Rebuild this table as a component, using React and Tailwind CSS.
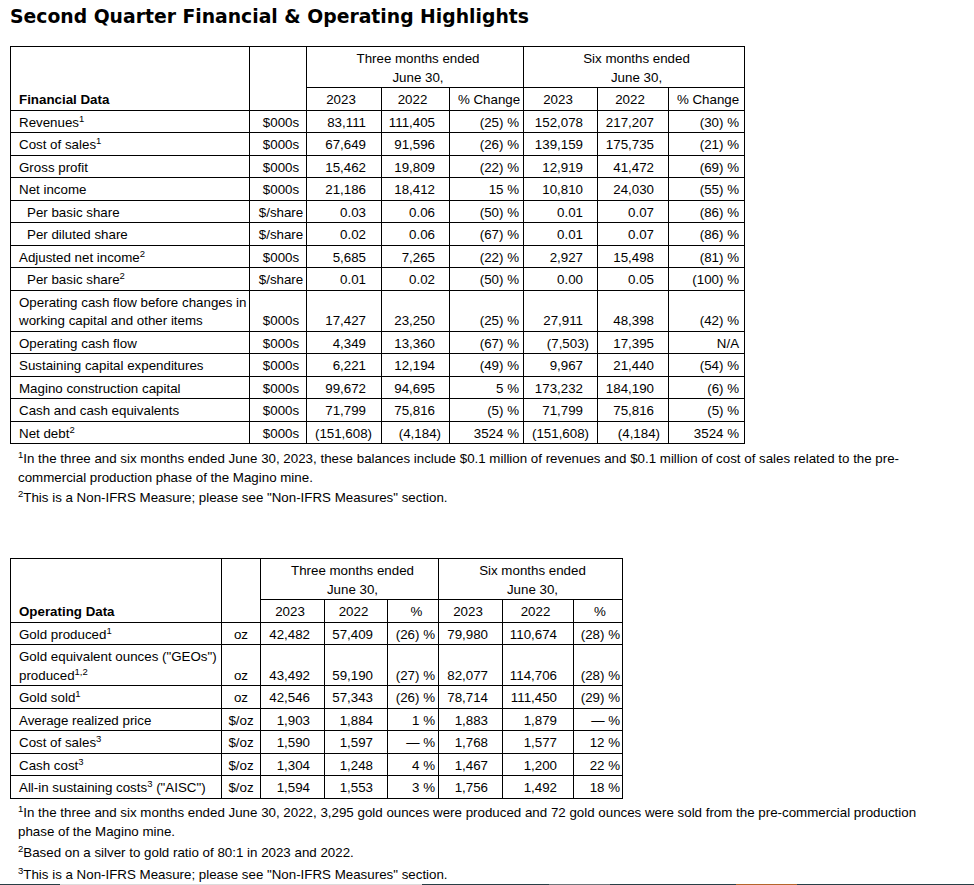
const financial = [
  { label: 'Revenues', sup: '1', unit: '$000s', v: ['83,111', '111,405', '(25) %', '152,078', '217,207', '(30) %'] },
  { label: 'Cost of sales', sup: '1', unit: '$000s', v: ['67,649', '91,596', '(26) %', '139,159', '175,735', '(21) %'] },
  { label: 'Gross profit', unit: '$000s', v: ['15,462', '19,809', '(22) %', '12,919', '41,472', '(69) %'] },
  { label: 'Net income', unit: '$000s', v: ['21,186', '18,412', '15 %', '10,810', '24,030', '(55) %'] },
  { label: 'Per basic share', indent: true, unit: '$/share', v: ['0.03', '0.06', '(50) %', '0.01', '0.07', '(86) %'] },
  { label: 'Per diluted share', indent: true, unit: '$/share', v: ['0.02', '0.06', '(67) %', '0.01', '0.07', '(86) %'] },
  { label: 'Adjusted net income', sup: '2', unit: '$000s', v: ['5,685', '7,265', '(22) %', '2,927', '15,498', '(81) %'] },
  { label: 'Per basic share', sup: '2', indent: true, unit: '$/share', v: ['0.01', '0.02', '(50) %', '0.00', '0.05', '(100) %'] },
  { label: ['Operating cash flow before changes in', 'working capital and other items'], unit: '$000s', v: ['17,427', '23,250', '(25) %', '27,911', '48,398', '(42) %'] },
  { label: 'Operating cash flow', unit: '$000s', v: ['4,349', '13,360', '(67) %', '(7,503)', '17,395', 'N/A'] },
  { label: 'Sustaining capital expenditures', unit: '$000s', v: ['6,221', '12,194', '(49) %', '9,967', '21,440', '(54) %'] },
  { label: 'Magino construction capital', unit: '$000s', v: ['99,672', '94,695', '5 %', '173,232', '184,190', '(6) %'] },
  { label: 'Cash and cash equivalents', unit: '$000s', v: ['71,799', '75,816', '(5) %', '71,799', '75,816', '(5) %'] },
  { label: 'Net debt', sup: '2', unit: '$000s', v: ['(151,608)', '(4,184)', '3524 %', '(151,608)', '(4,184)', '3524 %'] },
];

const operating = [
  { label: 'Gold produced', sup: '1', unit: 'oz', v: ['42,482', '57,409', '(26) %', '79,980', '110,674', '(28) %'] },
  { label: ['Gold equivalent ounces ("GEOs")', 'produced'], sup: '1,2', unit: 'oz', v: ['43,492', '59,190', '(27) %', '82,077', '114,706', '(28) %'] },
  { label: 'Gold sold', sup: '1', unit: 'oz', v: ['42,546', '57,343', '(26) %', '78,714', '111,450', '(29) %'] },
  { label: 'Average realized price', unit: '$/oz', v: ['1,903', '1,884', '1 %', '1,883', '1,879', '— %'] },
  { label: 'Cost of sales', sup: '3', unit: '$/oz', v: ['1,590', '1,597', '— %', '1,768', '1,577', '12 %'] },
  { label: 'Cash cost', sup: '3', unit: '$/oz', v: ['1,304', '1,248', '4 %', '1,467', '1,200', '22 %'] },
  { label: 'All-in sustaining costs', sup: '3', after: ' ("AISC")', unit: '$/oz', v: ['1,594', '1,553', '3 %', '1,756', '1,492', '18 %'] },
];

const cell = 'border border-black pt-[3px] pb-0 align-bottom';

function Sup({ children }) {
  return <sup className="text-[9.5px]">{children}</sup>;
}

function Label({ row }) {
  const lines = Array.isArray(row.label) ? row.label : [row.label];
  return (
    <>
      {lines.map((l, i) => (
        <span key={i}>
          {i > 0 && <br />}
          {l}
          {i === lines.length - 1 && row.sup && <Sup>{row.sup}</Sup>}
          {i === lines.length - 1 && row.after}
        </span>
      ))}
    </>
  );
}

// accounting style: plain numbers leave room for a closing paren
function Num({ value }) {
  if (value.endsWith(')')) return value;
  return (
    <>
      {value}
      <span className="inline-block w-[6px]" />
    </>
  );
}

function FinancialTable() {
  const pads = ['pr-[9px]', 'pr-[8px]', 'pr-[4px]', 'pr-[8px]', 'pr-[8px]', 'pr-[5px]'];
  return (
    <table className="table-fixed border-collapse w-[734px]">
      <colgroup>
        <col className="w-[239px]" />
        <col className="w-[57px]" />
        <col className="w-[75px]" />
        <col className="w-[68px]" />
        <col className="w-[74px]" />
        <col className="w-[74px]" />
        <col className="w-[71px]" />
        <col className="w-[76px]" />
      </colgroup>
      <thead>
        <tr>
          <th rowSpan={2} className={`${cell} text-left pl-[8px] font-bold`}>Financial Data</th>
          <th rowSpan={2} className={cell}></th>
          <th colSpan={3} className={`${cell} font-normal text-center pl-[6px]`}>Three months ended<br />June 30,</th>
          <th colSpan={3} className={`${cell} font-normal text-center pl-[5px]`}>Six months ended<br />June 30,</th>
        </tr>
        <tr>
          <th className={`${cell} font-normal text-center pr-[6px]`}>2023</th>
          <th className={`${cell} font-normal text-center pr-[6px]`}>2022</th>
          <th className={`${cell} font-normal text-center pl-[5px]`}>% Change</th>
          <th className={`${cell} font-normal text-center pr-[5px]`}>2023</th>
          <th className={`${cell} font-normal text-center pr-[6px]`}>2022</th>
          <th className={`${cell} font-normal text-center pl-[3px]`}>% Change</th>
        </tr>
      </thead>
      <tbody>
        {financial.map((row, r) => (
          <tr key={r}>
            <td className={`${cell} ${row.indent ? 'pl-[16px]' : 'pl-[8px]'}`}>
              <Label row={row} />
            </td>
            <td className={`${cell} text-center pl-[6px]`}>{row.unit}</td>
            {row.v.map((v, i) => (
              <td key={i} className={`${cell} text-right ${pads[i]}`}>
                {i === 2 || i === 5 ? v : <Num value={v} />}
              </td>
            ))}
          </tr>
        ))}
      </tbody>
    </table>
  );
}

function OperatingTable() {
  const pads = ['pr-[14px]', 'pr-[14px]', 'pr-[3px]', 'pr-[14px]', 'pr-[16px]', 'pr-[2px]'];
  return (
    <table className="table-fixed border-collapse w-[612px]">
      <colgroup>
        <col className="w-[211px]" />
        <col className="w-[39px]" />
        <col className="w-[64px]" />
        <col className="w-[63px]" />
        <col className="w-[51px]" />
        <col className="w-[64px]" />
        <col className="w-[71px]" />
        <col className="w-[49px]" />
      </colgroup>
      <thead>
        <tr>
          <th rowSpan={2} className={`${cell} text-left pl-[8px] font-bold`}>Operating Data</th>
          <th rowSpan={2} className={cell}></th>
          <th colSpan={3} className={`${cell} font-normal text-center pl-[6px]`}>Three months ended<br />June 30,</th>
          <th colSpan={3} className={`${cell} font-normal text-center pl-[4px]`}>Six months ended<br />June 30,</th>
        </tr>
        <tr>
          <th className={`${cell} font-normal text-center pr-[5px]`}>2023</th>
          <th className={`${cell} font-normal text-center pr-[5px]`}>2022</th>
          <th className={`${cell} font-normal text-center pl-[7px]`}>%</th>
          <th className={`${cell} font-normal text-center pr-[5px]`}>2023</th>
          <th className={`${cell} font-normal text-center pr-[5px]`}>2022</th>
          <th className={`${cell} font-normal text-center pl-[4px]`}>%</th>
        </tr>
      </thead>
      <tbody>
        {operating.map((row, r) => (
          <tr key={r}>
            <td className={`${cell} pl-[8px]`}>
              <Label row={row} />
            </td>
            <td className={`${cell} text-center`}>{row.unit}</td>
            {row.v.map((v, i) => (
              <td key={i} className={`${cell} text-right ${pads[i]}`}>{v}</td>
            ))}
          </tr>
        ))}
      </tbody>
    </table>
  );
}

function Note({ n, children, className = '' }) {
  return (
    <p className={`pl-[8px] ${className}`}>
      <Sup>{n}</Sup>
      {children}
    </p>
  );
}

export default function App() {
  return (
    <div className="h-[885px] flex flex-col bg-white text-black font-['Liberation_Sans',Arial,sans-serif] text-[13.33px] leading-[18.5px]">
      <div className="pl-[10px]">
        <h1 className="pt-[5px] font-['DejaVu_Sans',Verdana,sans-serif] font-bold text-[18.8px] leading-[24px] mb-[17px]">
          Second Quarter Financial &amp; Operating Highlights
        </h1>

        <FinancialTable />
        <div className="w-[915px] leading-[19px] mt-[5px]">
          <Note n="1">
            In the three and six months ended June 30, 2023, these balances include $0.1 million of revenues and $0.1
            million of cost of sales related to the pre-commercial production phase of the Magino mine.
          </Note>
          <Note n="2" className="mt-[1px]">This is a Non-IFRS Measure; please see "Non-IFRS Measures" section.</Note>
        </div>

        <div className="mt-[51px]">
          <OperatingTable />
        </div>
        <div className="w-[915px] leading-[19px] mt-[4px]">
          <Note n="1">
            In the three and six months ended June 30, 2022, 3,295 gold ounces were produced and 72 gold ounces were sold
            from the pre-commercial production phase of the Magino mine.
          </Note>
          <Note n="2" className="mt-[2px]">Based on a silver to gold ratio of 80:1 in 2023 and 2022.</Note>
          <Note n="3" className="mt-[3px]">This is a Non-IFRS Measure; please see "Non-IFRS Measures" section.</Note>
        </div>
      </div>

      <div className="mt-auto flex h-[2px]">
        <div className="w-[60px] bg-[#283e45]" />
        <div className="w-[362px] bg-[#dcdcdc]" />
        <div className="w-[127px] bg-[#283e45]" />
        <div className="w-[61px] bg-[#6d767a]" />
        <div className="w-[126px] bg-[#283e45]" />
        <div className="w-[61px] bg-[#b4652b]" />
        <div className="flex-1 bg-[#283e45]" />
      </div>
    </div>
  );
}
